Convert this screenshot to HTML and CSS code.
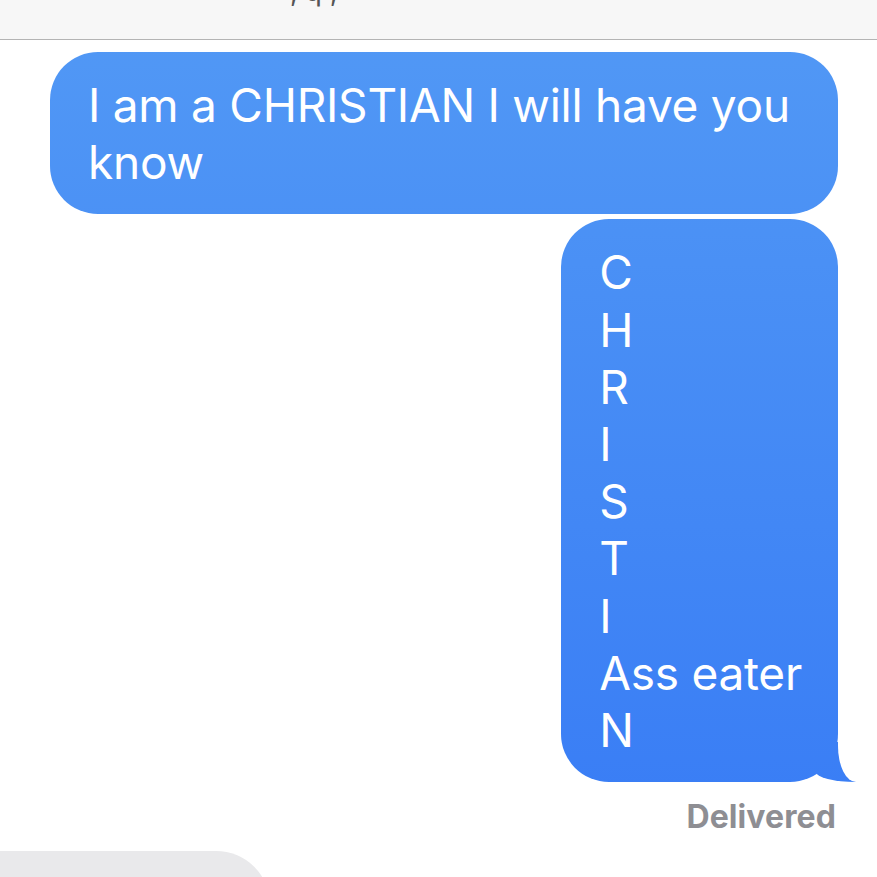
FILE: index.html
```html
<!DOCTYPE html>
<html lang="en">
<head>
  <meta charset="UTF-8">
  <title>Messages</title>
  <link rel="stylesheet" href="styles.css">
</head>
<body>
  <header class="topbar">
    <span class="topbar-title">‚ q ,</span>
  </header>

  <main class="thread">
    <div class="row row-sent">
      <div class="bubble bubble-sent">I am a CHRISTIAN I will have you know</div>
    </div>

    <div class="row row-sent">
      <div class="bubble bubble-sent bubble-tail">C<br>H<br>R<br>I<br>S<br>T<br>I<br>Ass eater<br>N</div>
    </div>

    <div class="status">Delivered</div>

    <div class="row row-received">
      <div class="bubble bubble-received"></div>
    </div>
  </main>
</body>
</html>
```

FILE: styles.css
```css
body {
  margin: 0;
  padding: 0;
  background: #fff;
  font-family: Inter, "Noto Sans", sans-serif;
  overflow: hidden;
}

.topbar {
  height: 39px;
  background: #f7f7f7;
  border-bottom: 1px solid #b4b4b4;
  overflow: hidden;
}

.topbar-title {
  display: block;
  margin-top: -24px;
  padding-left: 290px;
  font-size: 28px;
  line-height: 30px;
  color: #555;
}

.thread {
  padding: 12px 39px 0 50px;
}

.row {
  display: flex;
}

.row-sent {
  justify-content: flex-end;
  margin-bottom: 5px;
}

.bubble {
  font-size: 46px;
  line-height: 57.2px;
  letter-spacing: -0.25px;
  padding: 25px 36px 23px 38px;
  border-radius: 48px;
  color: #fff;
}

/* one gradient across the whole screen, like iMessage */
.bubble-sent {
  position: relative;
  background: linear-gradient(180deg, #5299f5 0%, #3a7ef5 90%, #3476f5 100%) fixed;
}

/* tail: a blue block under the corner, trimmed by a white scoop */
.bubble-tail::before {
  content: "";
  position: absolute;
  right: -18px;
  bottom: 0;
  width: 40px;
  height: 40px;
  background: linear-gradient(180deg, #5299f5 0%, #3a7ef5 90%, #3476f5 100%) fixed;
  border-bottom-left-radius: 40px 10px;
}

.bubble-tail::after {
  content: "";
  position: absolute;
  right: -40px;
  bottom: 0;
  width: 40px;
  height: 40px;
  background: #fff;
  border-bottom-left-radius: 18px 36px;
}

.status {
  text-align: right;
  padding-right: 2px;
  margin-top: 17px;
  font-size: 32px;
  font-weight: 700;
  letter-spacing: 0.1px;
  color: #8e8e93;
  line-height: 36px;
}

.row-received {
  margin-top: 16px;
  margin-left: -50px;
}

.bubble-received {
  width: 270px;
  height: 80px;
  padding: 0;
  background: #e9e9eb;
  border-radius: 0 54px 0 0;
}
```
